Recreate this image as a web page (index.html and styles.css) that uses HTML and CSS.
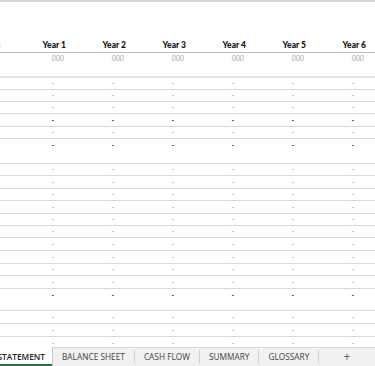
FILE: index.html
```html
<!DOCTYPE html>
<html>
<head>
<meta charset="utf-8">
<link rel="stylesheet" href="styles.css">
</head>
<body>
<div class="sheet">
  <div class="grid">
    <div class="row head">
      <div class="lab">s</div>
      <div class="c">Year 1</div><div class="c">Year 2</div><div class="c">Year 3</div>
      <div class="c">Year 4</div><div class="c">Year 5</div><div class="c">Year 6</div>
    </div>
    <div class="row units h12">
      <div class="lab"></div>
      <div class="c">000</div><div class="c">000</div><div class="c">000</div>
      <div class="c">000</div><div class="c">000</div><div class="c">000</div>
    </div>
    <div class="row thick h13"></div>

    <div class="row line h12 d"><div class="lab"></div><div class="c">-</div><div class="c">-</div><div class="c">-</div><div class="c">-</div><div class="c">-</div><div class="c">-</div></div>
    <div class="row line h12 d"><div class="lab"></div><div class="c">-</div><div class="c">-</div><div class="c">-</div><div class="c">-</div><div class="c">-</div><div class="c">-</div></div>
    <div class="row line h12 d"><div class="lab"></div><div class="c">-</div><div class="c">-</div><div class="c">-</div><div class="c">-</div><div class="c">-</div><div class="c">-</div></div>
    <div class="row line h13 d b"><div class="lab"></div><div class="c">-</div><div class="c">-</div><div class="c">-</div><div class="c">-</div><div class="c">-</div><div class="c">-</div></div>
    <div class="row line h12 d"><div class="lab"></div><div class="c">-</div><div class="c">-</div><div class="c">-</div><div class="c">-</div><div class="c">-</div><div class="c">-</div></div>
    <div class="row h13 d b"><div class="lab"></div><div class="c">-</div><div class="c">-</div><div class="c">-</div><div class="c">-</div><div class="c">-</div><div class="c">-</div></div>
    <div class="row line h12"></div>

    <div class="row line h12 d"><div class="lab"></div><div class="c">-</div><div class="c">-</div><div class="c">-</div><div class="c">-</div><div class="c">-</div><div class="c">-</div></div>
    <div class="row line h13 d"><div class="lab"></div><div class="c">-</div><div class="c">-</div><div class="c">-</div><div class="c">-</div><div class="c">-</div><div class="c">-</div></div>
    <div class="row line h12 d"><div class="lab"></div><div class="c">-</div><div class="c">-</div><div class="c">-</div><div class="c">-</div><div class="c">-</div><div class="c">-</div></div>
    <div class="row line h13 d"><div class="lab"></div><div class="c">-</div><div class="c">-</div><div class="c">-</div><div class="c">-</div><div class="c">-</div><div class="c">-</div></div>
    <div class="row line h12 d"><div class="lab"></div><div class="c">-</div><div class="c">-</div><div class="c">-</div><div class="c">-</div><div class="c">-</div><div class="c">-</div></div>
    <div class="row line h12 d"><div class="lab"></div><div class="c">-</div><div class="c">-</div><div class="c">-</div><div class="c">-</div><div class="c">-</div><div class="c">-</div></div>
    <div class="row line h13 d"><div class="lab"></div><div class="c">-</div><div class="c">-</div><div class="c">-</div><div class="c">-</div><div class="c">-</div><div class="c">-</div></div>
    <div class="row line h13 d"><div class="lab"></div><div class="c">-</div><div class="c">-</div><div class="c">-</div><div class="c">-</div><div class="c">-</div><div class="c">-</div></div>
    <div class="row line h12 d"><div class="lab"></div><div class="c">-</div><div class="c">-</div><div class="c">-</div><div class="c">-</div><div class="c">-</div><div class="c">-</div></div>
    <div class="row line h13 d"><div class="lab"></div><div class="c">-</div><div class="c">-</div><div class="c">-</div><div class="c">-</div><div class="c">-</div><div class="c">-</div></div>
    <div class="row h12 d b"><div class="lab"></div><div class="c">-</div><div class="c">-</div><div class="c">-</div><div class="c">-</div><div class="c">-</div><div class="c">-</div></div>
    <div class="row line h10"></div>

    <div class="row line h13 d"><div class="lab"></div><div class="c">-</div><div class="c">-</div><div class="c">-</div><div class="c">-</div><div class="c">-</div><div class="c">-</div></div>
    <div class="row line h13 d"><div class="lab"></div><div class="c">-</div><div class="c">-</div><div class="c">-</div><div class="c">-</div><div class="c">-</div><div class="c">-</div></div>
    <div class="row line h13 d"><div class="lab"></div><div class="c">-</div><div class="c">-</div><div class="c">-</div><div class="c">-</div><div class="c">-</div><div class="c">-</div></div>
  </div>
  <div class="tabs">
    <div class="tab active"><span class="hid">INCOME </span>STATEMENT</div>
    <div class="tab">BALANCE SHEET</div>
    <div class="tab">CASH FLOW</div>
    <div class="tab">SUMMARY</div>
    <div class="tab">GLOSSARY</div>
    <div class="tab add">+</div>
  </div>
</div>
</body>
</html>
```
FILE: styles.css
```css
html, body {
  margin: 0;
  padding: 0;
  background: #ffffff;
}
.sheet {
  width: 375px;
  height: 366px;
  display: flex;
  flex-direction: column;
  overflow: hidden;
  font-family: Lato, "Liberation Sans", sans-serif;
}
.grid {
  flex: 1;
  overflow: hidden;
  border-top: 2px solid #d4d4d4;
}
.row {
  display: flex;
  box-sizing: border-box;
}
.lab {
  width: 10px;
  flex: none;
  overflow: hidden;
}
.c {
  width: 60px;
  flex: none;
  box-sizing: border-box;
  text-align: right;
}
.head {
  height: 51px;
  align-items: flex-end;
  border-bottom: 1px solid #bcbcbc;
  padding-bottom: 2px;
  font-size: 8.5px;
  font-weight: 900;
  color: #111;
}
.head .c {
  padding-right: 4px;
}
.head .lab {
  color: #bbb;
  font-weight: 400;
  text-indent: -3px;
}
.h10 { height: 10px; }
.h12 { height: 12px; }
.h13 { height: 13px; }
.units {
  font-size: 7.5px;
  font-style: italic;
  color: #a8a8a8;
  padding-top: 1px;
  letter-spacing: -0.2px;
}
.units .c {
  padding-right: 6px;
}
.thick {
  border-bottom: 2px solid #e3e3e3;
}
.line {
  border-bottom: 1px solid #d9d9d9;
}
.d {
  font-size: 7px;
  color: #8a8a8a;
  align-items: center;
  line-height: 1;
}
.d .c {
  padding-right: 16px;
}
.b {
  color: #222;
  font-weight: 700;
}
.tabs {
  height: 19px;
  flex: none;
  display: flex;
  align-items: stretch;
  background: #f1f1f1;
  border-top: 1px solid #d6d6d6;
  font-family: "Open Sans", "Noto Sans", sans-serif;
  font-size: 8.3px;
  color: #444;
  box-sizing: border-box;
}
.tab {
  display: flex;
  align-items: center;
  padding: 0 9px;
  border-right: 1px solid #d0d0d0;
  white-space: nowrap;
  margin: 2px 0 3px;
}
.tab.active {
  background: #fff;
  margin: -1px 0 0 0;
  padding: 0 7px 0 0;
  color: #222;
  font-weight: 600;
  box-shadow: inset 0 -2px 0 #217346;
  border-right: 1px solid #c8c8c8;
  overflow: hidden;
  justify-content: flex-end;
  width: 53px;
  box-sizing: border-box;
  flex: none;
}
.hid {
  white-space: pre;
}
.tab.add {
  border-right: none;
  padding: 0 0 0 24px;
  font-size: 12px;
  color: #666;
}
```
